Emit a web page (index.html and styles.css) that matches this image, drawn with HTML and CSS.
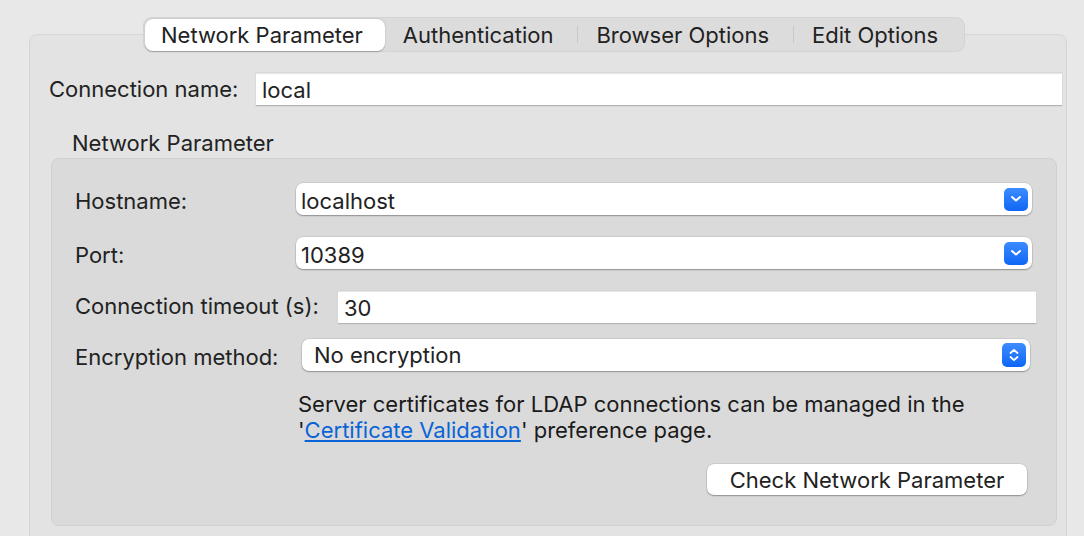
FILE: index.html
```html
<!DOCTYPE html>
<html>
<head>
<meta charset="utf-8">
<link rel="stylesheet" href="styles.css">
</head>
<body>
<div class="window">
  <div class="tabs">
    <div class="tab active">Network Parameter</div>
    <div class="tab">Authentication</div>
    <div class="sep"></div>
    <div class="tab">Browser Options</div>
    <div class="sep"></div>
    <div class="tab">Edit Options</div>
  </div>
  <div class="panel">
    <div class="conn-row">
      <label class="conn-label">Connection name:</label>
      <div class="text-input conn-input">local</div>
    </div>
    <div class="group-title">Network Parameter</div>
    <div class="group">
      <div class="row row-host">
        <label class="lbl lbl-host">Hostname:</label>
        <div class="combo combo-host">
          <span class="combo-text">localhost</span>
          <span class="combo-btn">
            <svg width="12" height="8" viewBox="0 0 12 8"><path d="M2 2 L6 5.5 L10 2" fill="none" stroke="#fff" stroke-width="2" stroke-linecap="round" stroke-linejoin="round"/></svg>
          </span>
        </div>
      </div>
      <div class="row row-port">
        <label class="lbl lbl-host">Port:</label>
        <div class="combo combo-host">
          <span class="combo-text">10389</span>
          <span class="combo-btn">
            <svg width="12" height="8" viewBox="0 0 12 8"><path d="M2 2 L6 5.5 L10 2" fill="none" stroke="#fff" stroke-width="2" stroke-linecap="round" stroke-linejoin="round"/></svg>
          </span>
        </div>
      </div>
      <div class="row row-timeout">
        <label class="lbl lbl-timeout">Connection timeout (s):</label>
        <div class="text-input timeout-input">30</div>
      </div>
      <div class="row row-enc">
        <label class="lbl lbl-enc">Encryption method:</label>
        <div class="combo combo-enc">
          <span class="combo-text enc-text">No encryption</span>
          <span class="combo-btn">
            <svg width="12" height="16" viewBox="0 0 12 16"><path d="M2.5 6 L6 2.8 L9.5 6 M2.5 10 L6 13.2 L9.5 10" fill="none" stroke="#fff" stroke-width="1.8" stroke-linecap="round" stroke-linejoin="round"/></svg>
          </span>
        </div>
      </div>
      <p class="note">Server certificates for LDAP connections can be managed in the<br>'<a class="link" href="#">Certificate Validation</a>' preference page.</p>
      <div class="btn-row">
        <button class="btn">Check Network Parameter</button>
      </div>
    </div>
  </div>
</div>
</body>
</html>
```

FILE: styles.css
```css
html, body {
  margin: 0;
  padding: 0;
  background: #e8e8e8;
  height: 100%;
  overflow: hidden;
}
body {
  font-family: Inter, "Noto Sans", sans-serif;
  font-size: 22px;
  color: #222;
}
.window {
  padding-top: 17px;
}
.tabs {
  position: relative;
  z-index: 2;
  display: flex;
  align-items: center;
  margin-left: 143px;
  width: 822px;
  height: 35px;
  box-sizing: border-box;
  background: #dcdcdc;
  border: 1px solid #d3d3d3;
  border-radius: 9px;
  padding: 0 1px;
}
.tab {
  height: 32px;
  line-height: 33px;
  padding: 0 24px 0 18px;
  color: #222;
  white-space: nowrap;
}
.tab.active {
  background: #fff;
  border-radius: 8px;
  box-shadow: 0 0.5px 1.5px rgba(0,0,0,0.28);
  padding: 0 22px 0 16px;
}
.sep {
  width: 1px;
  height: 17px;
  background: #c8c8c8;
}
.panel {
  margin-top: -18px;
  margin-left: 29px;
  width: 1038px;
  height: 520px;
  box-sizing: border-box;
  background: #e3e3e3;
  border: 1px solid #d6d6d6;
  border-radius: 8px;
  padding: 38px 4px 0 19px;
}
.conn-row {
  display: flex;
  align-items: center;
  height: 33px;
}
.conn-label {
  width: 207px;
  padding-bottom: 2px;
}
.text-input {
  background: #fff;
  box-sizing: border-box;
  border-top: 1px solid #e6e6e6;
  border-bottom: 1px solid #b3b3b3;
  box-shadow: 0 0 0 0.5px #d0d0d0;
  padding-left: 6px;
  line-height: 33px;
  height: 33px;
}
.conn-input {
  flex: 1;
}
.group-title {
  margin: 23px 0 0 23px;
  line-height: 28px;
  height: 29px;
}
.group {
  margin-left: 2px;
  width: 1006px;
  height: 368px;
  box-sizing: border-box;
  background: #dadada;
  border: 1px solid #d0d0d0;
  border-radius: 8px;
  padding: 24px 20px 0 23px;
}
.row {
  display: flex;
  align-items: center;
}
.row-host { height: 32px; }
.row-port { height: 32px; margin-top: 22px; }
.row-timeout { height: 33px; margin-top: 22px; }
.row-enc { height: 32px; margin-top: 15px; }
.lbl { padding-top: 4px; white-space: nowrap; flex-shrink: 0; }
.lbl-host { width: 221px; }
.lbl-timeout { width: 263px; padding-top: 0; padding-bottom: 3px; }
.lbl-enc { width: 227px; }
.combo {
  position: relative;
  display: flex;
  align-items: center;
  flex-shrink: 0;
  height: 32px;
  box-sizing: border-box;
  background: #fff;
  border-radius: 7px;
  box-shadow: 0 0 0 0.5px rgba(0,0,0,0.12), 0 1px 1.5px rgba(0,0,0,0.3);
}
.combo-host { width: 736px; }
.combo-enc { width: 728px; }
.combo-text {
  flex: 1;
  padding-left: 5px;
  padding-top: 3px;
}
.enc-text { padding-left: 12px; padding-top: 0; }
.combo-btn {
  width: 24px;
  height: 23px;
  margin-right: 4px;
  border-radius: 5px;
  background: linear-gradient(#3d8cff, #0f66f5);
  display: flex;
  align-items: center;
  justify-content: center;
}
.combo-enc .combo-btn {
  height: 24px;
}
.timeout-input {
  width: 698px;
  flex-shrink: 0;
  padding-left: 6px;
  line-height: 33px;
}
.note {
  margin: 20px 0 0 223px;
  line-height: 26px;
  color: #1b1b1b;
}
.link {
  color: #0a64d6;
  text-decoration: underline;
  text-underline-offset: 2px;
}
.btn-row {
  display: flex;
  justify-content: flex-end;
  margin-top: 21px;
  padding-right: 9px;
}
.btn {
  font-family: inherit;
  font-size: 22px;
  color: #222;
  width: 320px;
  height: 31px;
  background: #fff;
  border: none;
  border-radius: 7px;
  box-shadow: 0 0 0 0.5px rgba(0,0,0,0.12), 0 1px 1.5px rgba(0,0,0,0.3);
  padding: 0;
}
```
